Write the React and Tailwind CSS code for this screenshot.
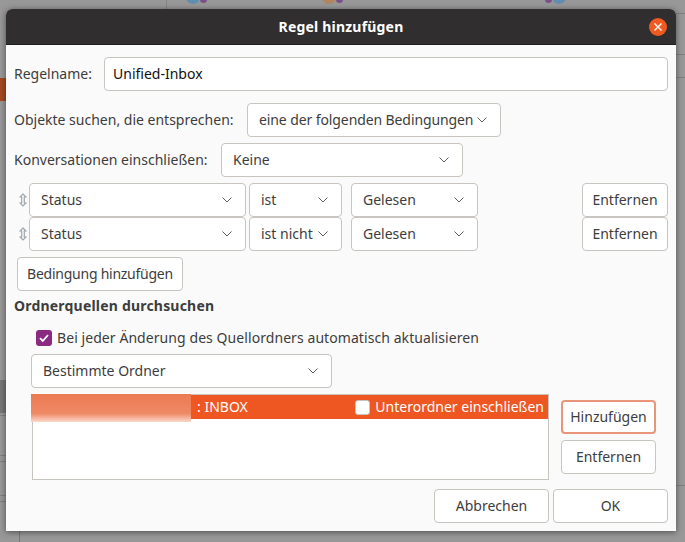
import React from 'react';

const Chevron = () => (
  <svg width="12" height="8" viewBox="0 0 12 8" fill="none" className="shrink-0">
    <path d="M1.5 1.5 L6 6 L10.5 1.5" stroke="#5d5d5d" strokeWidth="1" />
  </svg>
);

const Select = ({ label, className }) => (
  <div className={"h-[34px] bg-white border border-[#c8c4c0] rounded-[4px] flex items-center justify-between pl-[11px] pr-[12px] text-[#3d3d3d] " + className}>
    <span className="whitespace-nowrap pb-[2px]">{label}</span>
    <Chevron />
  </div>
);

const Btn = ({ label, className }) => (
  <div className={"h-[34px] pb-[2px] bg-white border border-[#c8c4c0] rounded-[4px] flex items-center justify-center text-[#3d3d3d] whitespace-nowrap " + className}>
    {label}
  </div>
);

const Grip = () => (
  <svg width="8" height="14" viewBox="0 0 8 14" fill="none" className="shrink-0">
    <path d="M4 1 L7 4 H5.3 V10 H7 L4 13 L1 10 H2.7 V4 H1 Z" stroke="#a0a6ac" strokeWidth="1.2" />
  </svg>
);

const ConditionRow = ({ op }) => (
  <div className="flex items-center h-[34px]">
    <div className="w-[15px] flex justify-center pl-[3px]"><Grip /></div>
    <Select label="Status" className="w-[217px]" />
    <Select label={op} className="w-[93px] ml-[3px]" />
    <Select label="Gelesen" className="w-[127px] ml-[9px]" />
    <Btn label="Entfernen" className="w-[86px] ml-auto" />
  </div>
);

// dimmed main window behind the dialog
const Backdrop = () => (
  <>
    <div className="absolute left-0 top-[78px] w-[6px] h-[23px] bg-[#a84a22]"></div>
    <div className="absolute left-0 top-[380px] w-[6px] h-[33px] bg-[#777777]"></div>
    <div className="absolute left-[166px] top-0 w-[1px] h-[9px] bg-[#858585]"></div>
    <div className="absolute left-0 top-[415px] w-[6px] h-[1px] bg-[#808080]"></div>
    <div className="absolute left-0 top-[455px] w-[6px] h-[1px] bg-[#808080]"></div>
    <div className="absolute left-0 top-[461px] w-[6px] h-[1px] bg-[#808080]"></div>
    <div className="absolute left-0 top-[495px] w-[6px] h-[1px] bg-[#808080]"></div>
    <div className="absolute left-0 top-[501px] w-[6px] h-[1px] bg-[#808080]"></div>
    <div className="absolute right-0 top-[13px] w-[9px] h-[1px] bg-[#808080]"></div>
    <div className="absolute right-0 top-[54px] w-[9px] h-[1px] bg-[#808080]"></div>
    <div className="absolute right-0 top-[77px] w-[9px] h-[1px] bg-[#808080]"></div>
    <div className="absolute right-0 top-[485px] w-[9px] h-[1px] bg-[#808080]"></div>
    <div className="absolute left-[19px] top-[531px] w-[1px] h-[11px] bg-[#777777]"></div>
    <div className="absolute left-[186px] -top-[10px] w-[14px] h-[14px] rounded-full bg-[#5f8fb0]"></div>
    <div className="absolute left-[200px] -top-[4px] w-[7px] h-[7px] rounded-full bg-[#7a4f8a]"></div>
    <div className="absolute left-[322px] -top-[10px] w-[14px] h-[14px] rounded-full bg-[#b08560]"></div>
    <div className="absolute left-[336px] -top-[4px] w-[7px] h-[7px] rounded-full bg-[#7a4f8a]"></div>
    <div className="absolute left-[552px] -top-[10px] w-[14px] h-[14px] rounded-full bg-[#5f8fb0]"></div>
    <div className="absolute left-[545px] -top-[4px] w-[7px] h-[7px] rounded-full bg-[#7a4f8a]"></div>
  </>
);

export default function App() {
  return (
    <div className="relative w-[685px] h-[542px] overflow-hidden bg-[#989898] text-[14px]" style={{ fontFamily: '"Noto Sans", sans-serif' }}>
      <Backdrop />

      <div className="absolute left-[6px] top-[9px] w-[670px] h-[522px] bg-[#fafafa] rounded-t-[6px] shadow-[0_1px_6px_rgba(0,0,0,0.5)] flex flex-col overflow-hidden">
        <div className="h-[36px] shrink-0 bg-[#302e2e] border-b border-[#1e1e1e] flex items-center justify-center relative">
          <span className="text-white font-bold text-[14px] tracking-[0.2px]">Regel hinzufügen</span>
          <div className="absolute right-[9px] top-[9px] w-[18px] h-[18px] rounded-full bg-[#ef5a21] flex items-center justify-center">
            <svg width="10" height="10" viewBox="0 0 10 10" fill="none">
              <path d="M1.5 1.5 L8.5 8.5 M8.5 1.5 L1.5 8.5" stroke="#ffffff" strokeWidth="1.4" />
            </svg>
          </div>
        </div>

        <div className="pl-[8px] pr-[8px] pt-[12px] flex flex-col">
          <div className="flex items-center h-[34px]">
            <span className="text-[#3d3d3d] w-[90px] whitespace-nowrap pb-[2px]">Regelname:</span>
            <div className="flex-1 h-[34px] pb-[2px] bg-white border border-[#c8c4c0] rounded-[4px] flex items-center pl-[8px] text-[#111111]">Unified-Inbox</div>
          </div>

          <div className="flex items-center h-[34px] mt-[12px]">
            <span className="text-[#3d3d3d] w-[233px] whitespace-nowrap pb-[2px]">Objekte suchen, die entsprechen:</span>
            <Select label={<span className="tracking-[-0.1px]">eine der folgenden Bedingungen</span>} className="w-[254px]" />
          </div>

          <div className="flex items-center h-[34px] mt-[6px]">
            <span className="text-[#3d3d3d] w-[207px] whitespace-nowrap pb-[2px]">Konversationen einschließen:</span>
            <Select label="Keine" className="w-[242px]" />
          </div>

          <div className="flex flex-col mt-[6px]">
            <ConditionRow op="ist" />
            <ConditionRow op="ist nicht" />
          </div>

          <Btn label="Bedingung hinzufügen" className="w-[166px] mt-[6px] ml-[3px] tracking-[-0.25px]" />

          <div className="font-bold text-[#3d3d3d] mt-[2px] h-[26px] pb-[2px] flex items-center tracking-[0.2px]">Ordnerquellen durchsuchen</div>

          <div className="flex items-center h-[20px] mt-[9px] ml-[22px]">
            <div className="w-[16px] h-[16px] rounded-[3px] bg-[#8a2a80] flex items-center justify-center">
              <svg width="12" height="12" viewBox="0 0 12 12" fill="none">
                <path d="M2 6.2 L4.8 9 L10 3" stroke="#ffffff" strokeWidth="1.8" />
              </svg>
            </div>
            <span className="ml-[5px] pb-[2px] text-[#3d3d3d] whitespace-nowrap tracking-[0.07px]">Bei jeder Änderung des Quellordners automatisch aktualisieren</span>
          </div>

          <Select label="Bestimmte Ordner" className="w-[301px] ml-[17px] mt-[6px]" />

          <div className="flex mt-[6px] ml-[18px]">
            <div className="relative w-[517px] h-[86px] bg-white border border-[#c8c4c0]">
              <div className="h-[24px] bg-[#ee5622] flex items-center text-white">
                <span className="ml-[164px] pb-[2px]">: INBOX</span>
                <div className="ml-auto w-[15px] h-[15px] bg-white rounded-[3px] border border-[#c8c4c0]"></div>
                <span className="ml-[5px] mr-[4px] pb-[2px] whitespace-nowrap">Unterordner einschließen</span>
              </div>
              <div className="absolute -left-[2px] -top-[1px] w-[160px] h-[28px] bg-gradient-to-b from-[#ec7a52] via-[#ee8a66] via-70% to-[#f9d8cc]"></div>
            </div>
            <div className="flex flex-col ml-[12px] mt-[6px] gap-[6px]">
              <Btn label="Hinzufügen" className="w-[95px] !border-[#e9957a] border-2" />
              <Btn label="Entfernen" className="w-[95px]" />
            </div>
          </div>

          <div className="flex justify-end gap-[4px] mt-[9px]">
            <Btn label="Abbrechen" className="w-[115px]" />
            <Btn label="OK" className="w-[115px]" />
          </div>
        </div>
      </div>
    </div>
  );
}
